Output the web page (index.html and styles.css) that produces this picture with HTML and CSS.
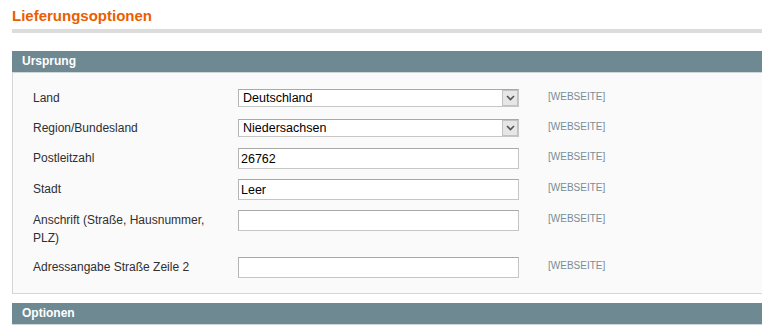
FILE: index.html
```html
<!DOCTYPE html>
<html lang="de">
<head>
    <meta charset="UTF-8">
    <title>Lieferungsoptionen</title>
    <link rel="stylesheet" href="styles.css">
</head>
<body>
    <div class="page">
        <h1>Lieferungsoptionen</h1>
        <div class="title_line"></div>

        <div class="section">
            <div class="section_head">Ursprung</div>
            <div class="section_body">
                <div class="row">
                    <label class="label">Land</label>
                    <div class="field">
                        <div class="select_wrap">
                            <select><option>Deutschland</option></select>
                            <span class="arrow"><svg width="9" height="6" viewBox="0 0 9 6"><path d="M1 1 L4.5 4.5 L8 1" fill="none" stroke="#555" stroke-width="1.6"/></svg></span>
                        </div>
                    </div>
                    <span class="scope">[WEBSEITE]</span>
                </div>
                <div class="row">
                    <label class="label">Region/Bundesland</label>
                    <div class="field">
                        <div class="select_wrap">
                            <select><option>Niedersachsen</option></select>
                            <span class="arrow"><svg width="9" height="6" viewBox="0 0 9 6"><path d="M1 1 L4.5 4.5 L8 1" fill="none" stroke="#555" stroke-width="1.6"/></svg></span>
                        </div>
                    </div>
                    <span class="scope">[WEBSEITE]</span>
                </div>
                <div class="row">
                    <label class="label">Postleitzahl</label>
                    <div class="field"><input type="text" value="26762"></div>
                    <span class="scope">[WEBSEITE]</span>
                </div>
                <div class="row">
                    <label class="label">Stadt</label>
                    <div class="field"><input type="text" value="Leer"></div>
                    <span class="scope">[WEBSEITE]</span>
                </div>
                <div class="row">
                    <label class="label">Anschrift (Straße, Hausnummer, PLZ)</label>
                    <div class="field"><input type="text" value=""></div>
                    <span class="scope">[WEBSEITE]</span>
                </div>
                <div class="row">
                    <label class="label">Adressangabe Straße Zeile 2</label>
                    <div class="field"><input type="text" value=""></div>
                    <span class="scope">[WEBSEITE]</span>
                </div>
            </div>
        </div>

        <div class="section">
            <div class="section_head">Optionen</div>
        </div>
    </div>
</body>
</html>
```

FILE: styles.css
```css
*{
    box-sizing: border-box;
}
body{
    margin: 0;
    padding: 0;
    background-color: #ffffff;
    font-family: "Liberation Sans", Arial, sans-serif;
    overflow: hidden;
}
.page{
    padding-left: 12px;
    width: 780px;
}
h1{
    margin: 0;
    padding-top: 6px;
    height: 29px;
    font-size: 15px;
    line-height: 20px;
    font-weight: bold;
    color: #eb5e00;
}
.title_line{
    height: 4px;
    background-color: #dcdcdc;
    margin-bottom: 18px;
}
.section{
    margin-bottom: 9px;
}
.section_head{
    height: 22px;
    background-color: #6f8992;
    border-bottom: 1px solid #cdd7da;
    color: #ffffff;
    font-size: 12px;
    font-weight: bold;
    line-height: 21px;
    padding-left: 10px;
}
.section_body{
    background-color: #fafafa;
    border-left: 1px solid #d6d6d6;
    border-bottom: 1px solid #d6d6d6;
    padding: 15px 0 15px 20px;
    display: flex;
    flex-direction: column;
    gap: 10px;
}
.row{
    display: flex;
    align-items: flex-start;
    min-height: 20px;
}
.label{
    width: 205px;
    padding: 1px 10px 0 0;
    font-size: 12px;
    line-height: 18px;
    color: #2f2f2f;
}
.field{
    width: 281px;
}
.field input{
    display: block;
    width: 281px;
    height: 21px;
    margin: 0;
    padding: 0 2px;
    border: 1px solid #c6c6c6;
    border-top-color: #a8a8a8;
    border-left-color: #b4b4b4;
    background-color: #ffffff;
    font-family: "Liberation Sans", Arial, sans-serif;
    font-size: 12.5px;
    color: #000000;
    outline: none;
}
.select_wrap{
    position: relative;
    margin-top: 1px;
}
.select_wrap select{
    display: block;
    width: 281px;
    height: 18px;
    margin: 0;
    padding: 0 0 0 4px;
    border: 1px solid #c6c6c6;
    border-top-color: #a8a8a8;
    border-left-color: #b4b4b4;
    background-color: #ffffff;
    font-family: "Liberation Sans", Arial, sans-serif;
    font-size: 12.5px;
    color: #000000;
    appearance: none;
    -webkit-appearance: none;
    outline: none;
    border-radius: 0;
}
.select_wrap .arrow{
    position: absolute;
    top: 1px;
    right: 1px;
    width: 16px;
    height: 16px;
    background-color: #e6e6e6;
    border: 1px solid #c2c2c2;
    display: flex;
    align-items: center;
    justify-content: center;
}
.scope{
    margin-left: 29px;
    padding-top: 3px;
    font-size: 10px;
    line-height: 12px;
    color: #788d97;
}
```
